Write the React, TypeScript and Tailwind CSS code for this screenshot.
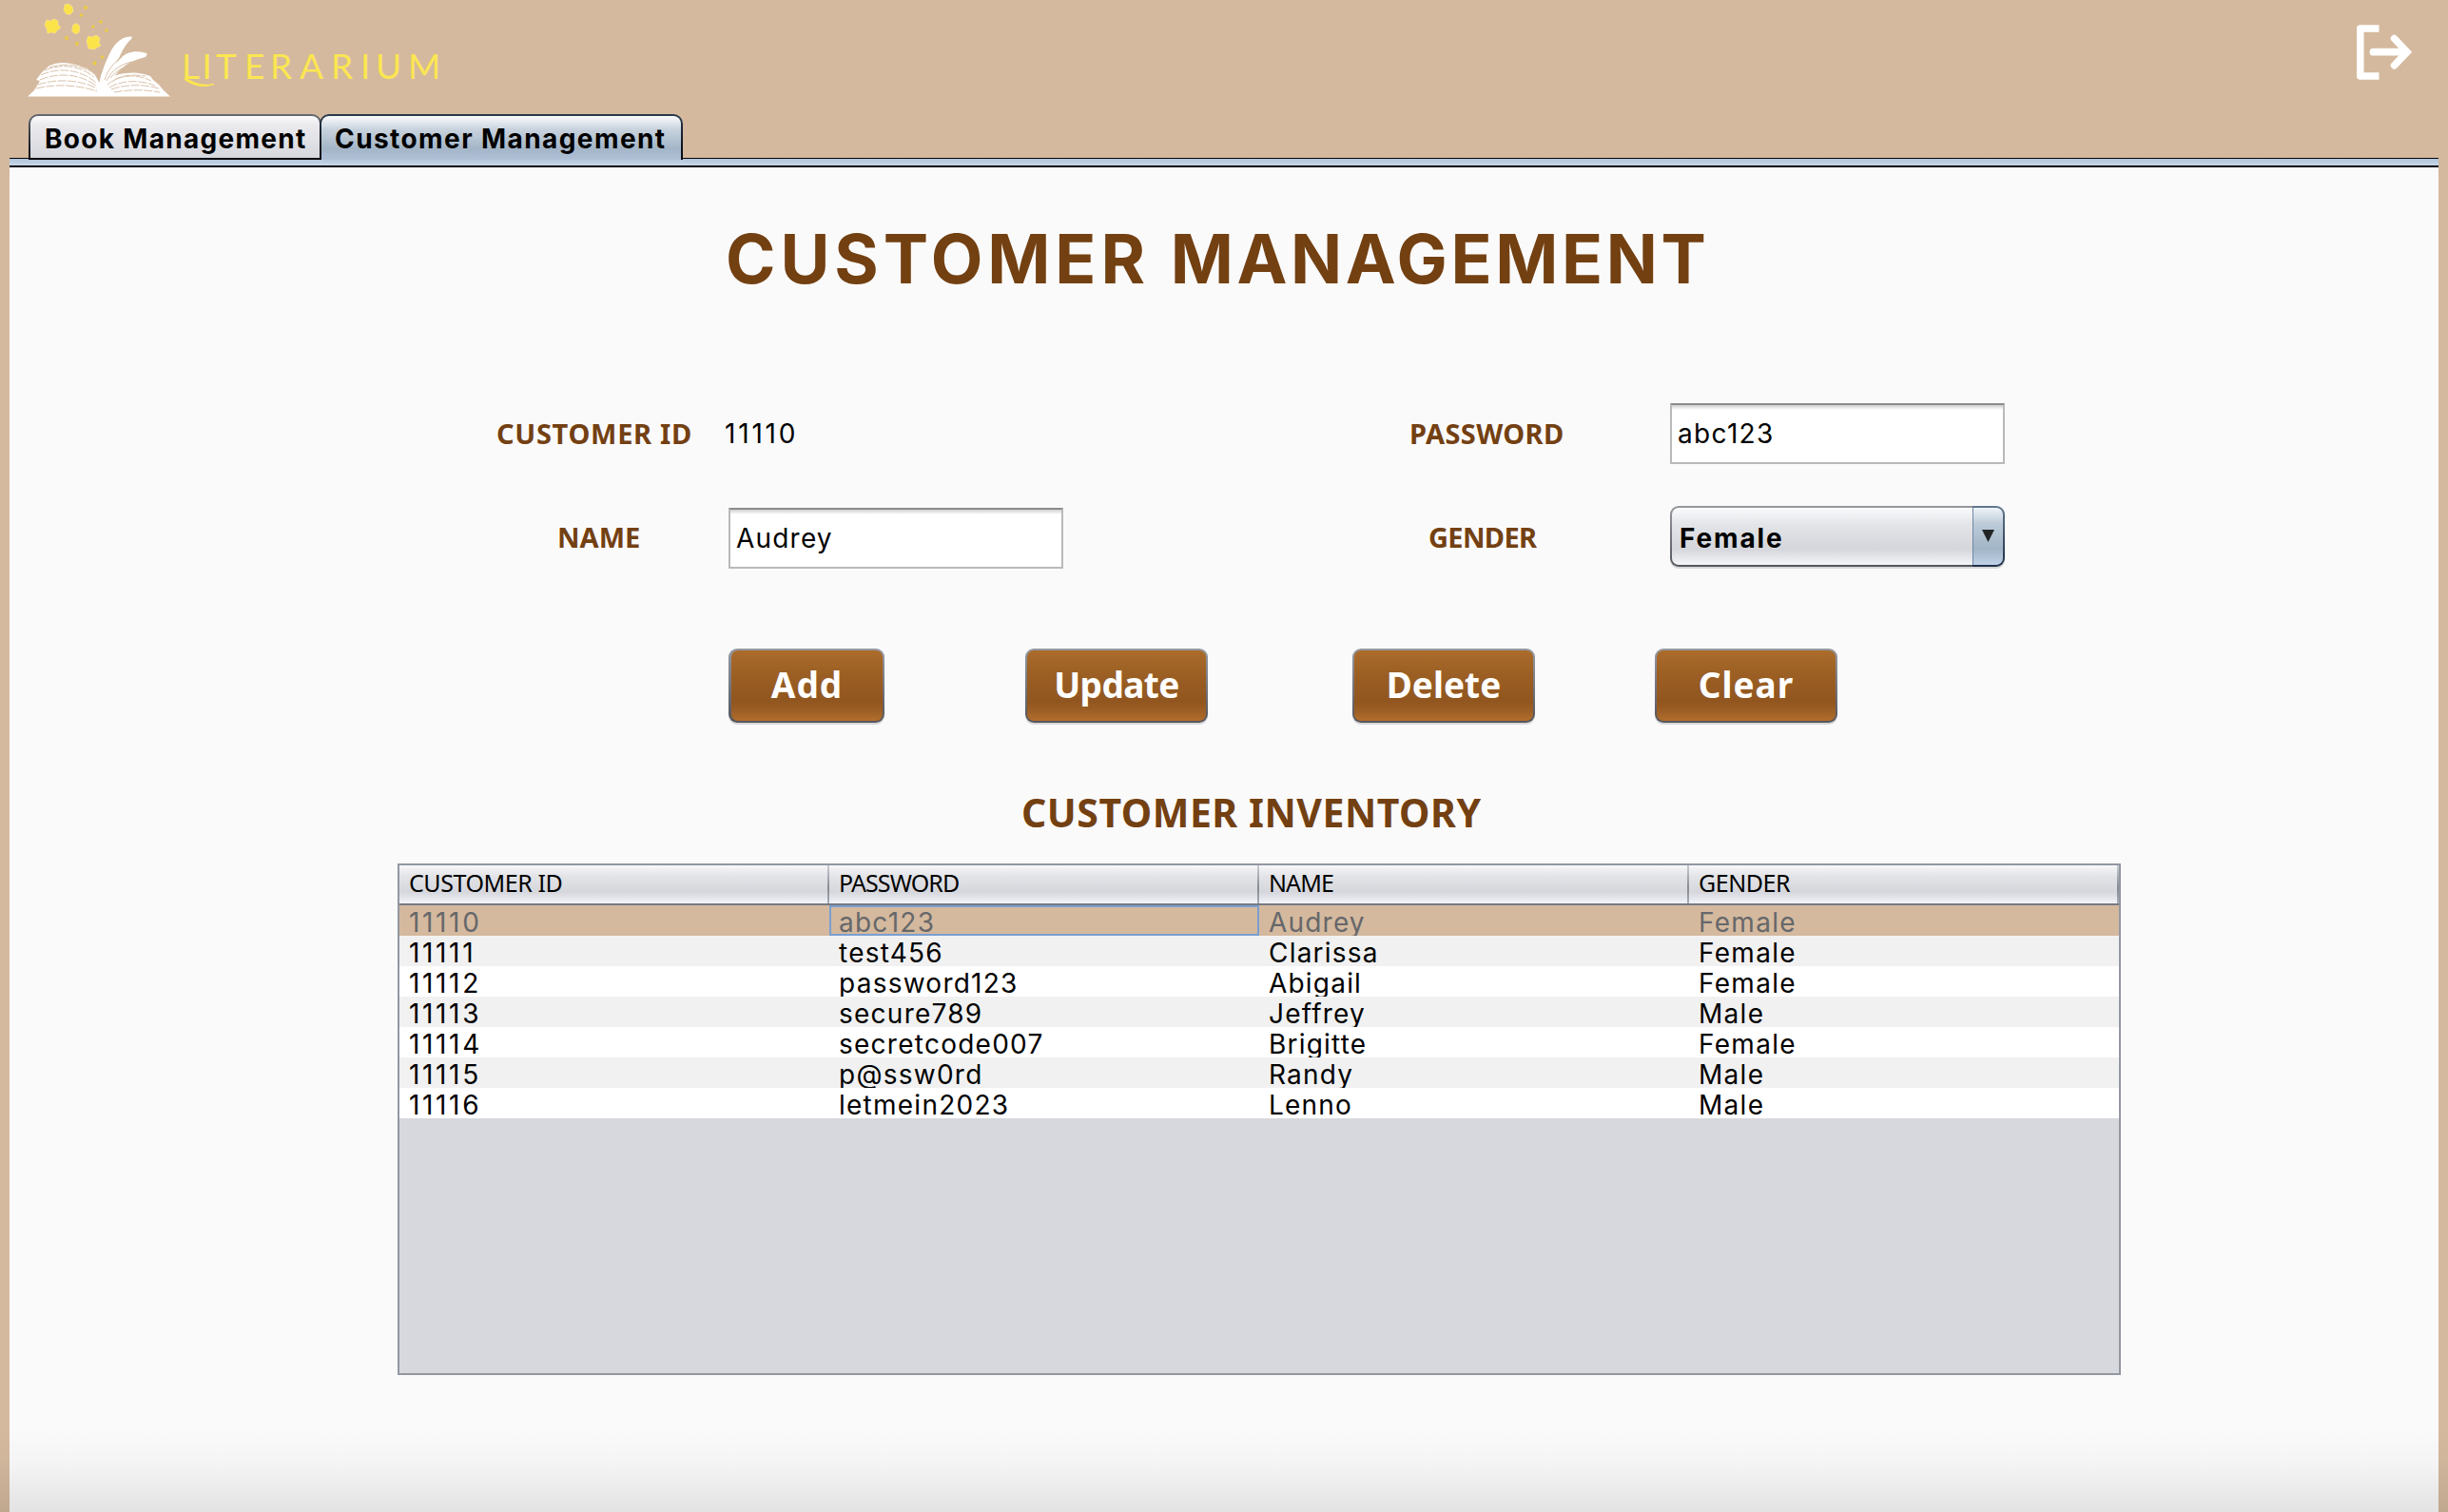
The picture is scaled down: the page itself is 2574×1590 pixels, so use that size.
import React from "react";

const INTER = "font-['Inter',sans-serif]";
const NOTO = "font-['Noto_Sans',sans-serif]";

type Customer = { id: string; password: string; name: string; gender: string };

const customers: Customer[] = [
  { id: "11110", password: "abc123", name: "Audrey", gender: "Female" },
  { id: "11111", password: "test456", name: "Clarissa", gender: "Female" },
  { id: "11112", password: "password123", name: "Abigail", gender: "Female" },
  { id: "11113", password: "secure789", name: "Jeffrey", gender: "Male" },
  { id: "11114", password: "secretcode007", name: "Brigitte", gender: "Female" },
  { id: "11115", password: "p@ssw0rd", name: "Randy", gender: "Male" },
  { id: "11116", password: "letmein2023", name: "Lenno", gender: "Male" },
];

function Logo() {
  return (
    <svg width="480" height="110" viewBox="0 0 480 110" className="block">
      <g fill="#fbe34a" stroke="#f7e08a" strokeWidth="0.8">
        <path d="M68 5l4-1 4 3 1 5-3 3-4 0-3-4z" />
        <path d="M49 21l4 1 4-2 4 2 0 4 3 3-4 3-2 3-4-1-4 1-1-5-2-4z" />
        <path d="M77 26l4-1.500 3 3.500-1 6-4 2-3.500-4z" />
        <path d="M93 38l4 1 4-2 4 3-1 5 2 3-4 2-3 2-6-1-1-4-1-4z" />
      </g>
      <g fill="#eccb3f">
        <circle cx="90" cy="8" r="2" />
        <circle cx="85.500" cy="16" r="1.700" />
        <circle cx="106" cy="23" r="1.800" />
        <circle cx="98" cy="28" r="1.700" />
        <circle cx="112" cy="32" r="1.800" />
        <circle cx="70" cy="40" r="1.900" />
        <circle cx="81" cy="46" r="1.900" />
        <circle cx="107.500" cy="60" r="1.800" />
        <circle cx="99.500" cy="66.500" r="1.900" />
      </g>
      <g fill="#fff">
        <path d="M29 101.500L36 95 42 85 38 84 44 76 52 69Q62 64 75 67 92 70 100 79L105 88 108 88Q118 78 132 77 146 75 158 80L161 84 167 89 172 95 179 101.500Z" />
        <path d="M103 95Q105 78 114 59C119 48 126 38 138 38.500L139 40Q131 47 126 59 118 74 108 93Z" />
        <path d="M106 94Q116 72 126 62C134 53 146 53 155 56.500L153 60 146 62Q132 66 122 78L110 94Z" />
      </g>
      <g fill="none" stroke="#d5baa0" strokeWidth="0.9">
        <path
          d="M43 79c14-7 38-9 58 8M42 84c16-7 40-8 59 6M40 89c18-6 42-6 62 4M38 93c20-5 44-4 64 3M47 74c16-7 36-6 52 7M52 71c14-5 30-3 43 4"
          strokeDasharray="9 1.500"
        />
        <path
          d="M113 89c10-9 28-13 46-4M115 92c12-7 30-9 48-2M117 94c14-5 32-6 50-1M120 97c16-3 32-3 48 0M119 85c8-6 20-7 34-5"
          strokeDasharray="9 1.500"
        />
        <path d="M110 84c4-11 9-18 18-24M112 85c6-11 12-16 26-20M116 82c7-8 14-12 24-15" />
      </g>
      <text
        y="83"
        x="191 212.500 227 257 284 315 348 379 395 429"
        fill="#fbe652"
        fontSize="37"
        className="font-['Lato',sans-serif]"
      >
        LITERARIUM
      </text>
      <path d="M195 82c8 5 18 9 30 6.500-10 4-22 2-31-5z" fill="#fbe652" stroke="#fbe652" strokeWidth="1" />
    </svg>
  );
}

function LogoutIcon() {
  return (
    <svg width="64" height="60" viewBox="0 0 64 60" fill="none" stroke="#fff" className="block">
      <path d="M26.500 4.900H6.800V55H26.500" strokeWidth="7.500" strokeLinejoin="round" />
      <path d="M20.500 29.700H52" strokeWidth="7.800" strokeLinecap="round" />
      <path d="M42.500 15.500L56 29.700L42.500 43.900" strokeWidth="7.500" strokeLinecap="round" strokeLinejoin="miter" />
    </svg>
  );
}

function Label({ children, className }: { children: React.ReactNode; className: string }) {
  return (
    <div className={`${NOTO} text-[29px] font-bold text-[#734012] whitespace-nowrap ${className}`}>
      {children}
    </div>
  );
}

function TextField({ value, className }: { value: string; className: string }) {
  return (
    <div
      className={`${INTER} h-[64px] w-[352px] border-2 border-[#b9b9b9] border-t-[#8b8b8b] bg-[linear-gradient(#d0d0d0,#ffffff_5px)] pl-[6px] text-[28px] leading-[60px] text-black ${className}`}
    >
      {value}
    </div>
  );
}

function ActionButton({ label, className }: { label: string; className: string }) {
  return (
    <button
      className={`h-[78px] rounded-[9px] bg-linear-to-b from-[#979aa2] to-[#54555b] p-[2px] shadow-[0_2px_0_#d6d6d8] ${className}`}
    >
      <span
        className={`${NOTO} flex h-full items-start justify-center rounded-[7px] bg-[linear-gradient(#ab6c2b,#9b5f24_35%,#91561f_72%,#9c5f25_86%,#b36e2c)] text-[37px] leading-[72px] font-bold text-white`}
      >
        {label}
      </span>
    </button>
  );
}

function Cell({ children, className }: { children: React.ReactNode; className: string }) {
  return <div className={`h-[32px] w-[452px] overflow-hidden pl-[10px] leading-[36px] ${className}`}>{children}</div>;
}

function HeaderCell({ label, className }: { label: string; className: string }) {
  return (
    <div className="flex h-[40px] w-[452px] justify-between pl-[10px]">
      <span className={`leading-[37px] ${className}`}>{label}</span>
      <span className="w-[2px] bg-[linear-gradient(#c9ccd2,#858a93_60%,#a9adb5)]" />
    </div>
  );
}

export default function App() {
  return (
    <div className="relative flex h-[1590px] w-[2574px] flex-col overflow-hidden bg-[#d4b99e]">
      <header className="flex h-[120px] items-start justify-between pr-[35px]">
        <Logo />
        <div className="pt-[25px]">
          <LogoutIcon />
        </div>
      </header>

      <nav className={`${INTER} z-10 flex h-[48px] pl-[30px] text-[28px] font-bold text-black`}>
        <div className="h-[48px] w-[308px] rounded-t-[10px] bg-linear-to-b from-[#666a72] to-[#05060f] p-[2px]">
          <div className="h-full rounded-t-[8px] bg-[linear-gradient(#fcfcfd,#ebebee_20%,#d6d7dd)] pl-[15px] leading-[49px] tracking-[1.3px] whitespace-nowrap">
            Book Management
          </div>
        </div>
        <div className="-ml-0.5 h-[48px] w-[382px] rounded-t-[10px] bg-linear-to-b from-[#2a3a4c] to-[#05060f] px-[2px] pt-[2px]">
          <div className="h-full rounded-t-[8px] bg-[linear-gradient(#fbfcfd,#c9d3de_30%,#a3b5c7_75%,#b0c1d8)] pl-[14px] leading-[49px] tracking-[1.42px] whitespace-nowrap">
            Customer Management
          </div>
        </div>
      </nav>

      <div className="mx-[10px] -mt-0.5 h-[10px] border-t border-b-2 border-[#05060f] bg-linear-to-b from-[#b1c3d9] to-[#c7d8e9]" />

      <main className="mx-[10px] flex-1 bg-[#fafafa] pt-[56px]">
        <h1
          className={`${INTER} ml-[753px] h-[80px] text-[71px] leading-[81px] font-bold tracking-[4.900px] whitespace-nowrap text-[#734012]`}
        >
          CUSTOMER <span className="tracking-[3.650px]">MANAGEMENT</span>
        </h1>

        <section className="mt-[112px] ml-[512px] grid grid-cols-[244px_716px_274px_352px] grid-rows-[64px_66px] gap-y-[44px]">
          <Label className="leading-[63px] tracking-[0.700px]">CUSTOMER ID</Label>
          <div className={`${INTER} -ml-1 text-[28px] leading-[65px] tracking-[2.800px] text-black`}>11110</div>
          <Label className="leading-[63px] tracking-[0.390px]">PASSWORD</Label>
          <TextField value="abc123" className="tracking-[1.320px]" />

          <Label className="pl-[64px] leading-[66px]">NAME</Label>
          <TextField value="Audrey" className="mt-[2px] tracking-[1.200px]" />
          <Label className="pl-[20px] leading-[66px] tracking-[-0.660px]">GENDER</Label>
          <div className="flex h-[64px] rounded-[9px] shadow-[0_2px_0_#d6d6d8]">
            <div className="w-[318px] rounded-l-[9px] bg-linear-to-b from-[#96989e] to-[#54565d] py-[2px] pl-[2px]">
              <div
                className={`${INTER} h-full rounded-l-[7px] bg-[linear-gradient(#fafbfc,#e4e5e9_28%,#d5d6db_72%,#f3f5f9)] pl-[8px] text-[28px] leading-[65px] font-bold tracking-[1.860px] text-black`}
              >
                Female
              </div>
            </div>
            <div className="w-[34px] rounded-r-[9px] bg-linear-to-b from-[#63788f] to-[#1f3048] py-[2px] pr-[2px]">
              <div className="flex h-full justify-center rounded-r-[7px] border-l border-[#6f87a3] bg-[linear-gradient(#f0f4f8,#bccbd9_28%,#a2b5c6_72%,#c0d2e8)] pt-[23px]">
                <svg width="13" height="13" viewBox="0 0 13 13" className="block">
                  <path d="M0 0H13L6.500 13Z" fill="#222426" />
                </svg>
              </div>
            </div>
          </div>
        </section>

        <section className="mt-[84px] ml-[756px] flex">
          <ActionButton label="Add" className="w-[164px] pl-[3px] tracking-[1px]" />
          <ActionButton label="Update" className="ml-[148px] w-[192px] tracking-[-0.590px]" />
          <ActionButton label="Delete" className="ml-[152px] w-[192px]" />
          <ActionButton label="Clear" className="ml-[126px] w-[192px] tracking-[1px]" />
        </section>

        <h2
          className={`${NOTO} mt-[64px] ml-[1064px] h-[60px] text-[41px] leading-[60px] font-bold tracking-[0.510px] whitespace-nowrap text-[#734012]`}
        >
          CUSTOMER INVENTORY
        </h2>

        <section className="mt-[24px] ml-[408px] h-[538px] w-[1812px] border-2 border-[#9297a1] bg-[#d7d8dd]">
          <div
            className={`${NOTO} flex h-[42px] border-b-2 border-[#777a84] bg-[linear-gradient(#f8f8fa,#e3e4e8_28%,#d6d7dc_70%,#f1f4fa)] text-[25px] text-black`}
          >
            <HeaderCell label="CUSTOMER ID" className="tracking-[-0.430px]" />
            <HeaderCell label="PASSWORD" className="tracking-[-0.910px]" />
            <HeaderCell label="NAME" className="tracking-[-0.880px]" />
            <HeaderCell label="GENDER" className="tracking-[-0.450px]" />
          </div>
          {customers.map((c, i) => {
            const tone =
              i === 0 ? "bg-[#d4b99e] text-[#66676a]" : i % 2 === 1 ? "bg-[#f1f1f1] text-black" : "bg-white text-black";
            return (
              <div key={c.id} className={`${INTER} flex h-[32px] text-[28px] ${tone}`}>
                <Cell className="tracking-[2.650px]">{c.id}</Cell>
                <Cell
                  className={
                    i === 0 ? "tracking-[1.250px] shadow-[inset_0_0_0_2px_#7a9fd0]" : "tracking-[1.250px]"
                  }
                >
                  {c.password}
                </Cell>
                <Cell className="tracking-[1.200px]">{c.name}</Cell>
                <Cell className="tracking-[1.300px]">{c.gender}</Cell>
              </div>
            );
          })}
        </section>
      </main>

      <div className="pointer-events-none absolute inset-x-0 bottom-0 h-[90px] bg-[linear-gradient(transparent,rgba(0,0,0,0.02)_40%,rgba(0,0,0,0.095))]" />
    </div>
  );
}
